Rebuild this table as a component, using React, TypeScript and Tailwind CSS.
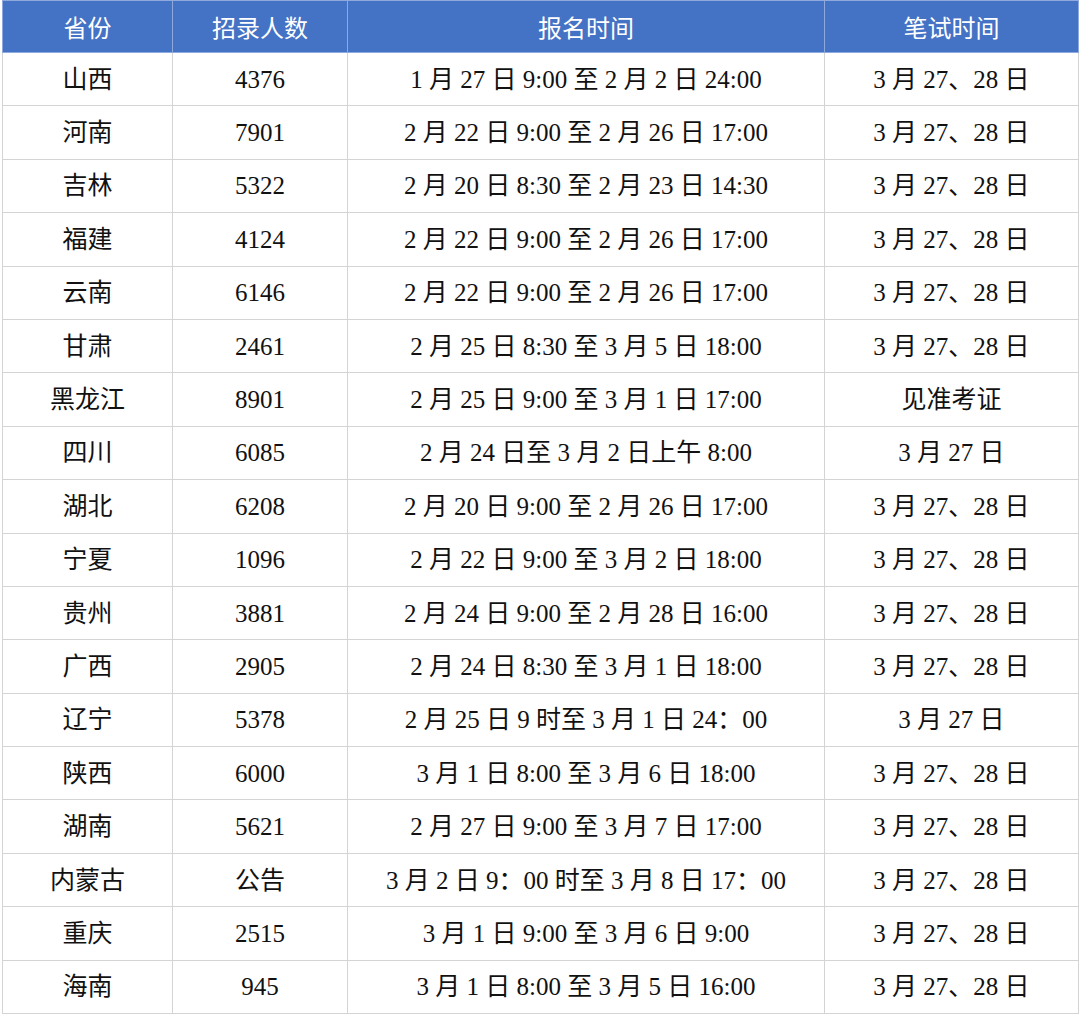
import React from "react";

const rows: [string, string, string, string][] = [
  ["山西", "4376", "1 月 27 日 9:00 至 2 月 2 日 24:00", "3 月 27、28 日"],
  ["河南", "7901", "2 月 22 日 9:00 至 2 月 26 日 17:00", "3 月 27、28 日"],
  ["吉林", "5322", "2 月 20 日 8:30 至 2 月 23 日 14:30", "3 月 27、28 日"],
  ["福建", "4124", "2 月 22 日 9:00 至 2 月 26 日 17:00", "3 月 27、28 日"],
  ["云南", "6146", "2 月 22 日 9:00 至 2 月 26 日 17:00", "3 月 27、28 日"],
  ["甘肃", "2461", "2 月 25 日 8:30 至 3 月 5 日 18:00", "3 月 27、28 日"],
  ["黑龙江", "8901", "2 月 25 日 9:00 至 3 月 1 日 17:00", "见准考证"],
  ["四川", "6085", "2 月 24 日至 3 月 2 日上午 8:00", "3 月 27 日"],
  ["湖北", "6208", "2 月 20 日 9:00 至 2 月 26 日 17:00", "3 月 27、28 日"],
  ["宁夏", "1096", "2 月 22 日 9:00 至 3 月 2 日 18:00", "3 月 27、28 日"],
  ["贵州", "3881", "2 月 24 日 9:00 至 2 月 28 日 16:00", "3 月 27、28 日"],
  ["广西", "2905", "2 月 24 日 8:30 至 3 月 1 日 18:00", "3 月 27、28 日"],
  ["辽宁", "5378", "2 月 25 日 9 时至 3 月 1 日 24：00", "3 月 27 日"],
  ["陕西", "6000", "3 月 1 日 8:00 至 3 月 6 日 18:00", "3 月 27、28 日"],
  ["湖南", "5621", "2 月 27 日 9:00 至 3 月 7 日 17:00", "3 月 27、28 日"],
  ["内蒙古", "公告", "3 月 2 日 9：00 时至 3 月 8 日 17：00", "3 月 27、28 日"],
  ["重庆", "2515", "3 月 1 日 9:00 至 3 月 6 日 9:00", "3 月 27、28 日"],
  ["海南", "945", "3 月 1 日 8:00 至 3 月 5 日 16:00", "3 月 27、28 日"],
];

const headers = ["省份", "招录人数", "报名时间", "笔试时间"];

export default function App() {
  return (
    <div className="w-[1080px] h-[1019px] bg-white pl-[2px]">
      <table
        className="border-collapse table-fixed w-[1076px]"
        style={{}}
      >
        <colgroup>
          <col className="w-[170px]" />
          <col className="w-[175px]" />
          <col className="w-[477px]" />
          <col className="w-[254px]" />
        </colgroup>
        <thead>
          <tr className="h-[52px] bg-[#4472c4]">
            {headers.map((h) => (
              <th
                key={h}
                className="border border-[#8fa9dc] text-white font-normal text-[24px] text-center p-0 font-['Noto_Sans_CJK_SC',sans-serif]"
              >
                {h}
              </th>
            ))}
          </tr>
        </thead>
        <tbody>
          {rows.map((r, i) => (
            <tr key={i} className="h-[53.4px]">
              {r.map((c, j) => (
                <td
                  key={j}
                  className="border border-[#d4d4d4] text-center p-0 text-[#111] text-[25px] leading-none font-['Liberation_Serif','Noto_Sans_CJK_SC',serif]"
                >
                  {c}
                </td>
              ))}
            </tr>
          ))}
        </tbody>
      </table>
    </div>
  );
}
